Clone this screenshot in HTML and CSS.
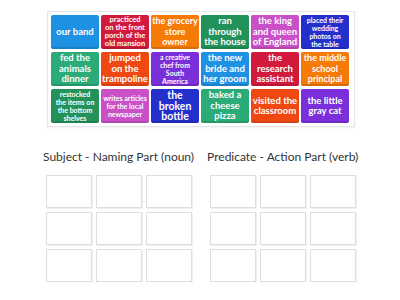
FILE: index.html
```html
<!DOCTYPE html>
<html>
<head>
    <link rel="stylesheet" href="styles.css">
</head>
<body>
    <div class="bank">
        <div class="tile c1 fs-lg">our band</div>
        <div class="tile c2 fs-sm">practiced<br>on the front<br>porch of the<br>old mansion</div>
        <div class="tile c3 fs-md">the grocery<br>store<br>owner</div>
        <div class="tile c4 fs-lg">ran<br>through<br>the house</div>
        <div class="tile c5 fs-lg">the king<br>and queen<br>of England</div>
        <div class="tile c6 fs-xs">placed their<br>wedding<br>photos on<br>the table</div>
        <div class="tile c7 fs-lg">fed the<br>animals<br>dinner</div>
        <div class="tile c8 fs-lg">jumped<br>on the<br>trampoline</div>
        <div class="tile c9 fs-xs">a creative<br>chef from<br>South<br>America</div>
        <div class="tile c1 fs-lg">the new<br>bride and<br>her groom</div>
        <div class="tile c2 fs-lg">the<br>research<br>assistant</div>
        <div class="tile c3 fs-md">the middle<br>school<br>principal</div>
        <div class="tile c4 fs-xs">restocked<br>the items on<br>the bottom<br>shelves</div>
        <div class="tile c5 fs-xs">writes articles<br>for the local<br>newspaper</div>
        <div class="tile c6 fs-xl">the<br>broken<br>bottle</div>
        <div class="tile c7 fs-lg">baked a<br>cheese<br>pizza</div>
        <div class="tile c8 fs-lg">visited the<br>classroom</div>
        <div class="tile c9 fs-lg">the little<br>gray cat</div>
    </div>

    <div class="sorting">
        <div class="group">
            <div class="group-title">Subject - Naming Part (noun)</div>
            <div class="slots">
                <div class="slot"></div><div class="slot"></div><div class="slot"></div>
                <div class="slot"></div><div class="slot"></div><div class="slot"></div>
                <div class="slot"></div><div class="slot"></div><div class="slot"></div>
            </div>
        </div>
        <div class="group">
            <div class="group-title">Predicate - Action Part (verb)</div>
            <div class="slots">
                <div class="slot"></div><div class="slot"></div><div class="slot"></div>
                <div class="slot"></div><div class="slot"></div><div class="slot"></div>
                <div class="slot"></div><div class="slot"></div><div class="slot"></div>
            </div>
        </div>
    </div>
</body>
</html>
```

FILE: styles.css
```css
body {
    margin: 0;
    background: #fff;
    font-family: 'Lato', 'Open Sans', sans-serif;
    color: #333;
}

.bank {
    margin: 11px 0 0 47px;
    width: 300px;
    padding: 3px;
    border: 1px solid #e6e6e6;
    box-shadow: 0 1px 2px rgba(0,0,0,0.06);
    display: grid;
    grid-template-columns: repeat(6, 48px);
    grid-auto-rows: 34px;
    gap: 3px 2px;
}

.tile {
    display: flex;
    align-items: center;
    justify-content: center;
    text-align: center;
    color: #fff;
    font-weight: 700;
    border-radius: 2px;
    box-shadow: inset 0 -2px 0 rgba(0,0,0,0.12);
    overflow: hidden;
}

.fs-xl { font-size: 10.5px; line-height: 10.8px; }
.fs-lg { font-size: 9.5px; line-height: 10.5px; }
.fs-md { font-size: 9px; line-height: 10.5px; }
.fs-sm { font-size: 7.5px; line-height: 8.2px; }
.fs-xs { font-size: 7px; line-height: 8.2px; }

.c1 { background: #1f91e3; }
.c2 { background: #d21a3c; }
.c3 { background: #f57a06; }
.c4 { background: #23915a; }
.c5 { background: #c950c6; }
.c6 { background: #2330cc; }
.c7 { background: #2aab78; }
.c8 { background: #ef4813; }
.c9 { background: #7a2fdb; }

.sorting {
    display: flex;
    gap: 13px;
    margin: 22px 0 0 43px;
}

.group-title {
    font-size: 12px;
    line-height: 16px;
    white-space: nowrap;
    margin-bottom: 10px;
}

.slots {
    margin-left: 3px;
    display: grid;
    grid-template-columns: repeat(3, 46px);
    grid-auto-rows: 33px;
    gap: 4px;
}

.slot {
    border: 1px solid #dedede;
    box-shadow: 1px 1px 1px rgba(0,0,0,0.06);
    background: #fff;
}
```
